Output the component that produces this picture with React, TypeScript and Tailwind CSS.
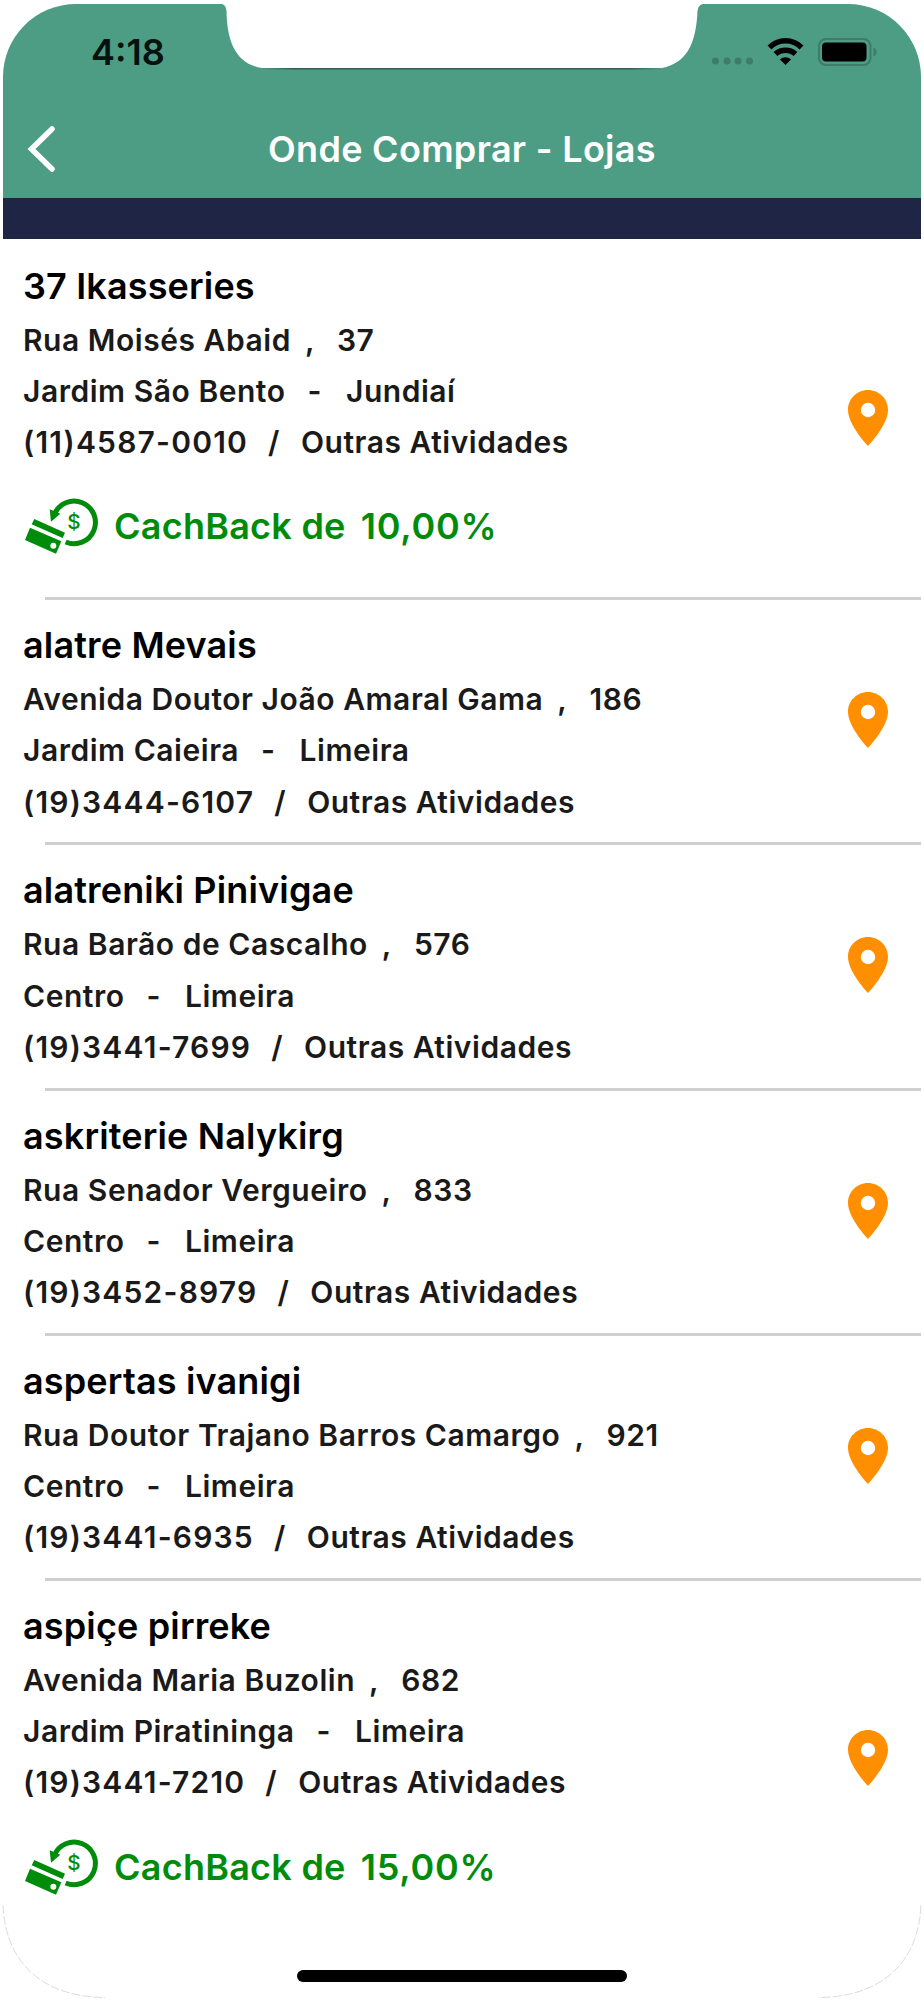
import { Fragment } from 'react';

const stores = [
  { name: '37 Ikasseries', street: 'Rua Moisés Abaid', number: '37', district: 'Jardim São Bento', city: 'Jundiaí', phone: '(11)4587-0010', cashback: '10,00%' },
  { name: 'alatre Mevais', street: 'Avenida Doutor João Amaral Gama', number: '186', district: 'Jardim Caieira', city: 'Limeira', phone: '(19)3444-6107' },
  { name: 'alatreniki Pinivigae', street: 'Rua Barão de Cascalho', number: '576', district: 'Centro', city: 'Limeira', phone: '(19)3441-7699' },
  { name: 'askriterie Nalykirg', street: 'Rua Senador Vergueiro', number: '833', district: 'Centro', city: 'Limeira', phone: '(19)3452-8979' },
  { name: 'aspertas ivanigi', street: 'Rua Doutor Trajano Barros Camargo', number: '921', district: 'Centro', city: 'Limeira', phone: '(19)3441-6935' },
  { name: 'aspiçe pirreke', street: 'Avenida Maria Buzolin', number: '682', district: 'Jardim Piratininga', city: 'Limeira', phone: '(19)3441-7210', cashback: '15,00%' },
];

const Notch = () => (
  <svg className="absolute left-[222px] top-0" width="486" height="72" viewBox="222 0 486 72">
    <defs>
      <linearGradient id="notchLine" x1="0" x2="1" y1="0" y2="0">
        <stop offset="0" stopColor="#2f5f51" stopOpacity="0" />
        <stop offset="0.08" stopColor="#2f5f51" />
        <stop offset="0.92" stopColor="#2f5f51" />
        <stop offset="1" stopColor="#2f5f51" stopOpacity="0" />
      </linearGradient>
    </defs>
    <path d="M222 0V4Q226 5 226.500 11C227 42 236 64 262 68H662C686 63 696 45 697.500 11Q698 5 703 4V0Z" fill="#fff" />
    <rect x="262" y="68" width="400" height="1.500" fill="url(#notchLine)" />
  </svg>
);

const StatusIcons = () => (
  <svg width="170" height="36" viewBox="710 34 170 36">
    <g fill="#3d7c69">
      <circle cx="715.500" cy="61" r="3.500" />
      <circle cx="727" cy="61" r="3.500" />
      <circle cx="738" cy="61" r="3.500" />
      <circle cx="749.500" cy="61" r="3.500" />
    </g>
    <g fill="none" stroke="#000" strokeWidth="5.500">
      <path d="M769.500 47.500C778.500 38.500 792.500 38.500 801.500 47.500" />
      <path d="M775.500 54C781 49 790 49 795.500 54" />
    </g>
    <path d="M780 59.500C783 56.500 788 56.500 791 59.500L785.500 65Z" />
    <rect x="819" y="39" width="51.500" height="26" rx="7" fill="none" stroke="#3d7c69" strokeWidth="2" />
    <rect x="822" y="42.500" width="44.500" height="19" rx="4" />
    <path d="M873.500 47.500Q876.500 49 876.500 52T873.500 56.500Z" fill="#3d7c69" />
  </svg>
);

const CashbackIcon = () => (
  <svg className="ml-px shrink-0" width="76" height="60" viewBox="72 48 228 180" fill="#008c0a">
    <path d="M163 103A64 64 0 1 1 197 186" fill="none" stroke="#008c0a" strokeWidth="15" />
    <path d="M149 88L181 101L153 125Z" />
    <path d="M103 117L195 158L188 174L95 133Z" />
    <path d="M90 143L184 184L168 221L75 180Z" />
    <circle cx="160" cy="197" r="9" fill="#fff" />
    <text x="222" y="148" textAnchor="middle" fontFamily="Inter, sans-serif" fontSize="62" fontWeight="500">$</text>
  </svg>
);

const PinIcon = () => (
  <svg className="mb-[23px] shrink-0" width="40" height="56" viewBox="0 0 40 56">
    <path
      d="M20 0C8.800 0 0 9 0 20C0 35 20 56 20 56C20 56 40 35 40 20C40 9 31.200 0 20 0ZM20 12.800A7.200 7.200 0 1 1 20 27.200A7.200 7.200 0 1 1 20 12.800Z"
      fill="#ff8f00"
    />
  </svg>
);

const StoreRow = ({ store }: { store: any }) => (
  <div className="flex items-center justify-between pl-5 pr-[33px] pt-[21px]">
    <div className={store.cashback ? 'pb-[41px]' : 'pb-[14.6px]'}>
      <h2 className="mb-[5px] text-[36px] font-semibold leading-[48px] tracking-[0.15px] text-black">{store.name}</h2>
      <div className="text-[30px] font-semibold leading-[51.2px] tracking-[0.53px] text-[#1a1a1a]">
        <p className="flex whitespace-nowrap">
          <span>{store.street}</span>
          <span className="ml-[14px] mr-[22px]">,</span>
          <span>{store.number}</span>
        </p>
        <p className="flex whitespace-nowrap">
          <span>{store.district}</span>
          <span className="ml-[22px] mr-[24px]">-</span>
          <span>{store.city}</span>
        </p>
        <p className="flex whitespace-nowrap">
          <span className="tracking-[1.2px]">{store.phone}</span>
          <span className="ml-[20px] mr-[21px]">/</span>
          <span>Outras Atividades</span>
        </p>
      </div>
      {store.cashback && (
        <div className="mt-7 flex h-[60px] items-center whitespace-nowrap text-[36px] font-semibold leading-[60px] text-[#008c0a]">
          <CashbackIcon />
          <span className="ml-[14px] tracking-[0.25px]">CachBack de</span>
          <span className="ml-[15px] tracking-[0.8px]">{store.cashback}</span>
        </div>
      )}
    </div>
    <PinIcon />
  </div>
);

const App = () => {
  return (
    <div className="relative h-[2000px] w-[924px] overflow-hidden bg-white px-[3px] pt-1 font-['Inter',sans-serif]">
      <header className="h-[194px] rounded-t-[73px] bg-[#4d9c84]">
        <div className="flex h-[94px] items-start justify-between pl-[88px] pr-[41px] pt-[30px]">
          <span className="text-[36px] font-semibold leading-[36px] text-[#06120f]">4:18</span>
          <StatusIcons />
        </div>
        <div className="grid h-[100px] grid-cols-[80px_1fr_80px] items-start">
          <svg className="ml-[24px] mt-[27px]" width="30" height="48" viewBox="27 125 30 48" fill="none" stroke="#fff" strokeWidth="5.500">
            <path d="M52 129L31.500 149L52 169" strokeLinecap="round" />
          </svg>
          <h1 className="mt-[27px] whitespace-nowrap text-center text-[36px] font-semibold leading-[48px] tracking-[0.3px] text-white">Onde Comprar - Lojas</h1>
        </div>
      </header>
      <Notch />

      <div className="h-[41px] bg-[#1f2544]" />

      <main className="pt-[1.5px]">
        {stores.map((store, index) => (
          <Fragment key={store.name}>
            {index > 0 && <div className="ml-[42px] h-[3px] bg-[#cfcfcf]" />}
            <StoreRow store={store} />
          </Fragment>
        ))}
      </main>

      {/* screen edge and home indicator */}
      <svg className="absolute bottom-0 left-0" width="924" height="120" viewBox="0 1880 924 120" fill="none" stroke="#dcdcdc" strokeDasharray="9 2">
        <path d="M3 1905C5 1960 40 1997 105 1997.500" />
        <path d="M921 1905C919 1960 884 1997 819 1997.500" />
      </svg>
      <div className="absolute bottom-[18px] left-[297px] h-3 w-[330px] rounded-full bg-black" />
    </div>
  );
};

export default App;
